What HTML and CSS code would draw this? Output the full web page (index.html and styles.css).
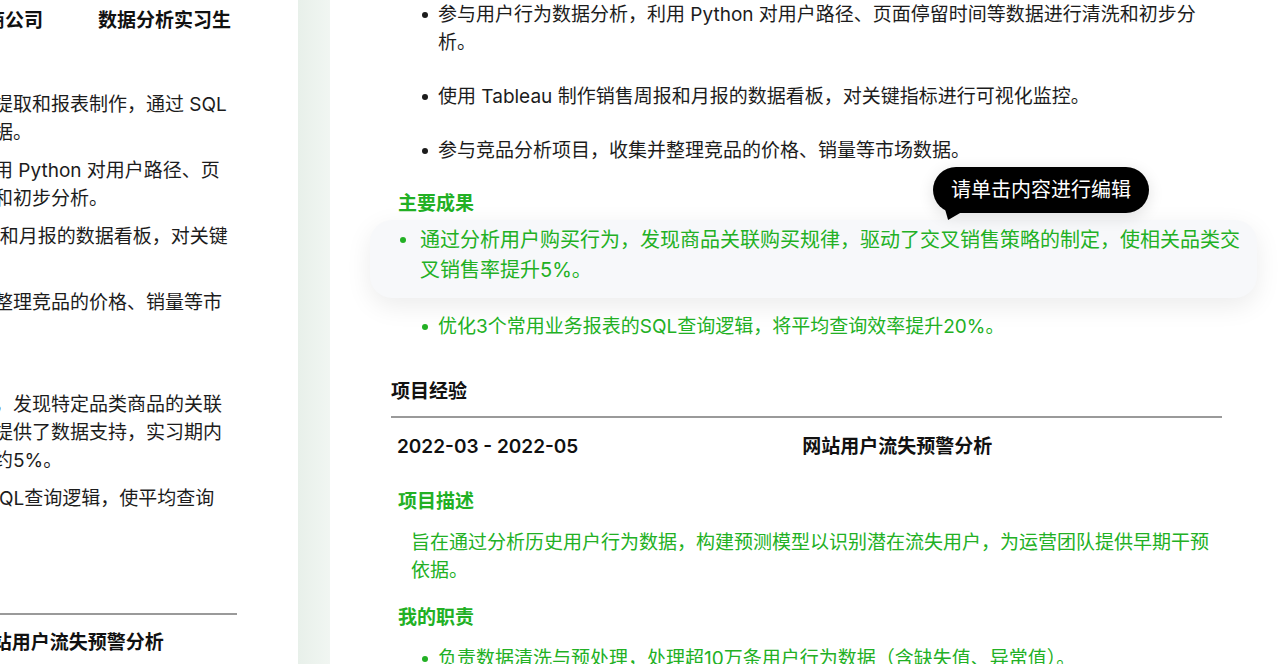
FILE: index.html
```html
<!DOCTYPE html>
<html lang="zh-CN">
<head>
    <meta charset="UTF-8">
    <meta name="viewport" content="width=device-width, initial-scale=1.0">
    <title>简历编辑器</title>
    <link rel="stylesheet" href="styles.css">
</head>
<body>
    <div class="app">
        <!-- left: live preview of the resume -->
        <aside class="preview">
            <div class="preview-page">
                <div class="pv-row">
                    <span>2021-07 - 2021-10</span>
                    <span>某电商公司</span>
                    <span>数据分析实习生</span>
                </div>
                <h4 class="pv-sub">工作内容</h4>
                <ul class="pv-list">
                    <li>协助团队完成日常销售数据提取和报表制作，通过 SQL<br>从业务数据库中提取所需数据。</li>
                    <li>参与用户行为数据分析，利用 Python 对用户路径、页<br>面停留时间等数据进行清洗和初步分析。</li>
                    <li>使用 Tableau 制作销售周报和月报的数据看板，对关键<br>指标进行可视化监控。</li>
                    <li>参与竞品分析项目，收集并整理竞品的价格、销量等市<br>场数据。</li>
                </ul>
                <h4 class="pv-sub">主要成果</h4>
                <ul class="pv-list">
                    <li>通过分析用户购买行为数据，发现特定品类商品的关联<br>购买规律，为交叉销售策略提供了数据支持，实习期内<br>使相关品类交叉销售率提升约5%。</li>
                    <li>优化3个常用业务报表中的SQL查询逻辑，使平均查询<br>效率提升20%。</li>
                </ul>
                <h3 class="pv-title">项目经验</h3>
                <div class="pv-row pv-row-project">
                    <span>2022-03 - 2022-05</span>
                    <span>网站用户流失预警分析</span>
                    <span></span>
                </div>
            </div>
        </aside>

        <div class="divider"></div>

        <!-- right: editable resume -->
        <main class="editor">
            <ul class="list list-top">
                <li>参与用户行为数据分析，利用 Python 对用户路径、页面停留时间等数据进行清洗和初步分析。</li>
                <li>使用 Tableau 制作销售周报和月报的数据看板，对关键指标进行可视化监控。</li>
                <li>参与竞品分析项目，收集并整理竞品的价格、销量等市场数据。</li>
            </ul>

            <h4 class="sub">主要成果</h4>
            <ul class="list green">
                <li class="is-active">
                    通过分析用户购买行为，发现商品关联购买规律，驱动了交叉销售策略的制定，使相关品类交叉销售率提升5%。
                    <span class="tip">请单击内容进行编辑</span>
                </li>
                <li>优化3个常用业务报表的SQL查询逻辑，将平均查询效率提升20%。</li>
            </ul>

            <h3 class="section-title">项目经验</h3>
            <div class="row">
                <span>2022-03 - 2022-05</span>
                <span>网站用户流失预警分析</span>
                <span></span>
            </div>

            <h4 class="sub">项目描述</h4>
            <p class="desc">旨在通过分析历史用户行为数据，构建预测模型以识别潜在流失用户，为运营团队提供早期干预依据。</p>

            <h4 class="sub">我的职责</h4>
            <ul class="list green">
                <li>负责数据清洗与预处理，处理超10万条用户行为数据（含缺失值、异常值）。</li>
                <li>使用 Python 构建逻辑回归与随机森林模型，对用户流失概率进行预测。</li>
            </ul>
        </main>
    </div>
</body>
</html>
```

FILE: styles.css
```css
body {
    margin: 0;
    font-family: 'Inter', 'Noto Sans CJK SC', sans-serif;
    font-size: 19px;
    line-height: 28px;
    color: #1c1c1c;
    background-color: #fff;
}

h3, h4, p {
    margin: 0;
    font-size: 19px;
}

.app {
    display: flex;
    height: 664px;
    overflow: hidden;
}

/* ---------- preview pane ---------- */

.preview {
    flex: none;
    width: 298px;
    overflow: hidden;
    background-color: #fff;
}

.preview-page {
    width: 518px;
    margin-left: -281px; /* scrolled to the right */
    padding-top: 7px;
}

.pv-row {
    display: flex;
    justify-content: space-between;
    padding: 0 6px;
    font-weight: 600;
    color: #111;
    white-space: nowrap;
}

.pv-sub {
    margin: 14px 0;
    padding-left: 6px;
    font-weight: 600;
}

.pv-list + .pv-sub {
    margin: 9px 0;
}

.pv-list {
    list-style: none;
    margin: 0;
    padding: 0;
}

.pv-list li {
    position: relative;
    padding-left: 47px;
    margin-bottom: 10px;
    white-space: nowrap;
}

.pv-list li:last-child {
    margin-bottom: 0;
}

.pv-list li::before {
    content: "";
    position: absolute;
    left: 31px;
    top: 11px;
    width: 6px;
    height: 6px;
    border-radius: 50%;
    background-color: currentColor;
}

.pv-title {
    margin-top: 34px;
    padding-bottom: 10px;
    border-bottom: 2px solid #9a9a9a;
    font-weight: 600;
}

.pv-row-project {
    margin-top: 14px;
}

/* ---------- gap between panes ---------- */

.divider {
    flex: none;
    width: 32px;
    background: linear-gradient(90deg, #e8f0ea, #f1f6f2);
}

/* ---------- editor pane ---------- */

.editor {
    flex: 1;
    overflow: hidden;
    padding: 0 58px 0 61px;
    background-color: #fff;
}

.list {
    list-style: none;
    margin: 0;
    padding: 0;
}

.list-top {
    margin-top: -12px;
}

.list li {
    position: relative;
    padding: 13px 16px 13px 47px;
}

.list li::before {
    content: "";
    position: absolute;
    left: 31px;
    top: 24px;
    width: 6px;
    height: 6px;
    border-radius: 50%;
    background-color: currentColor;
}

.green {
    color: #22b024;
}

.sub {
    margin-top: 12px;
    padding-left: 7px;
    font-weight: 600;
    color: #22b024;
}

/* item under the mouse */
.list li.is-active {
    margin: 2px -35px 2px -21px;
    padding: 5px 10px 13px 50px;
    font-size: 20px;
    line-height: 30px;
    background-color: #f7f8fa;
    border-radius: 22px;
    box-shadow: 0 8px 26px rgba(0, 0, 0, 0.08);
}

.list li.is-active::before {
    left: 30px;
    top: 17px;
}

.tip {
    position: absolute;
    left: 563px;
    top: -53px;
    height: 46px;
    padding: 0 18px;
    line-height: 46px;
    font-size: 20px;
    color: #fff;
    background-color: #000;
    border-radius: 23px;
    white-space: nowrap;
    box-shadow: 0 4px 16px rgba(0, 0, 0, 0.12);
}

.tip::after {
    content: "";
    position: absolute;
    left: 12px;
    bottom: -7px;
    width: 22px;
    height: 11px;
    background-color: #000;
    clip-path: polygon(0 0, 100% 0, 14% 100%);
}

.section-title {
    margin-top: 24px;
    padding-bottom: 10px;
    border-bottom: 2px solid #9a9a9a;
    font-weight: 600;
    color: #111;
}

.row {
    display: flex;
    justify-content: space-between;
    margin: 15px 0 27px;
    padding: 0 6px;
    font-weight: 600;
    color: #111;
}

.desc {
    margin: 13px 0 19px;
    padding-left: 20px;
    color: #22b024;
}
```
